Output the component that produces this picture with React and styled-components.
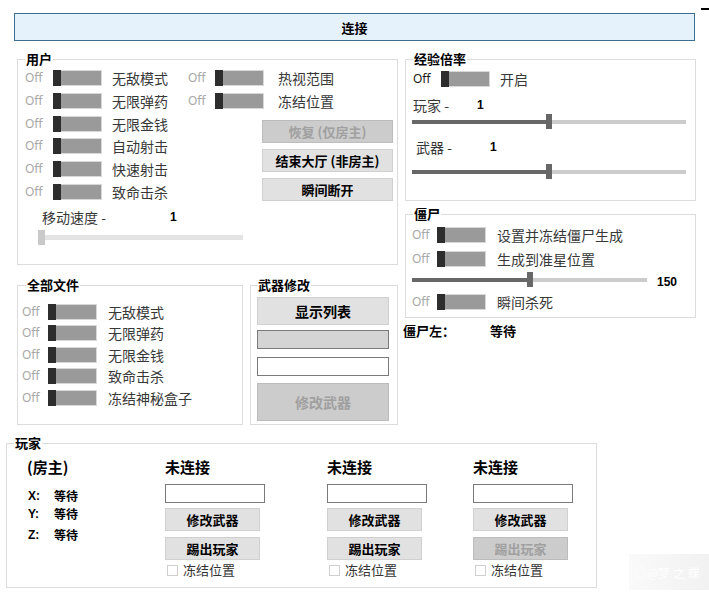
import React from 'react';
import styled, { createGlobalStyle } from 'styled-components';

const GlobalStyle = createGlobalStyle`
    body {
        margin: 0;
        background: #fff;
    }
    * {
        box-sizing: border-box;
    }
`;

const CJK = `"Noto Sans CJK SC", "Noto Sans", sans-serif`;

const Page = styled.div`
    width: 709px;
    height: 592px;
    position: relative;
    overflow: hidden;
    background: #fff;
    font-family: ${CJK};
    color: #000;
`;

const TopBar = styled.div`
    display: flex;
    align-items: flex-start;
    height: 41px;
    padding: 8px 0 0 14px;
`;

const ConnectButton = styled.div`
    margin-top: 5px;
    width: 681px;
    height: 28px;
    display: flex;
    align-items: center;
    justify-content: center;
    border: 1px solid #3e6f8e;
    background: #e5f1fb;
    font-size: 13px;
    font-weight: 700;
`;

const Dash = styled.span`
    margin-left: 6px;
    width: 8px;
    height: 2px;
    background: #000;
`;

const Main = styled.div`
    display: grid;
    grid-template-columns: 381px 291px;
    column-gap: 7px;
    padding-left: 17px;
    margin-top: 11px;
    align-items: start;
`;

const Column = styled.div`
    display: flex;
    flex-direction: column;
    gap: ${({ gap }) => gap}px;
`;

const Group = styled.fieldset`
    margin: ${({ $m }) => $m || 0};
    padding: 0;
    min-width: 0;
    width: ${({ $w }) => $w}px;
    height: ${({ $h }) => $h}px;
    border: 1px solid #dcdcdc;
`;

const Legend = styled.legend`
    margin-left: ${({ $ml }) => ($ml === undefined ? 7 : $ml)}px;
    padding: 0 1px;
    height: 14px;
    font-size: 13px;
    font-weight: 700;
    line-height: 14px;
`;

const Body = styled.div`
    padding: ${({ pad }) => pad};
    display: flex;
    flex-direction: column;
`;

/* toggle */
const Row = styled.div`
    display: flex;
    align-items: center;
    height: ${({ h }) => h}px;
    margin-top: ${({ mt }) => mt || 0}px;
`;

const Off = styled.span`
    width: ${({ w }) => w}px;
    font-family: "Noto Sans", sans-serif;
    font-size: 12px;
    line-height: 1;
    color: ${({ dark }) => (dark ? '#1a1a1a' : '#a8a8a8')};
`;

const Switch = styled.span`
    display: flex;
    width: 49px;
    height: 16px;
`;

const Knob = styled.span`
    width: 8px;
    background: #2d2d2d;
`;

const Track = styled.span`
    flex: 1;
    background: #9a9a9a;
    border: 1px solid #d8d8d8;
    border-left: none;
`;

const Label = styled.span`
    margin-left: ${({ gap }) => gap}px;
    font-size: 14px;
    line-height: 1;
    color: #383838;
    white-space: nowrap;
`;

const Toggle = ({ label, offW, gap, h, dark, mt }) => (
    <Row h={h} mt={mt}>
        <Off w={offW} dark={dark}>
            Off
        </Off>
        <Switch>
            <Knob />
            <Track />
        </Switch>
        <Label gap={gap}>{label}</Label>
    </Row>
);

/* slider */
const SliderBox = styled.div`
    position: relative;
    display: flex;
    align-items: center;
    width: ${({ w }) => (w ? `${w}px` : '100%')};
    height: 15px;
    margin: ${({ m }) => m || 0};
    flex-shrink: 0;
`;

const Rail = styled.div`
    width: 100%;
    height: ${({ light }) => (light ? 5 : 4)}px;
    background: ${({ light }) => (light ? '#e3e3e3' : '#cccccc')};
`;

const Thumb = styled.div`
    position: absolute;
    top: 0;
    width: ${({ light }) => (light ? 7 : 6)}px;
    height: 15px;
    background: ${({ light }) => (light ? '#c9c9c9' : '#676767')};
`;

const Slider = ({ value, light, w, m }) => {
    const pct = value * 100;
    return (
        <SliderBox w={w} m={m}>
            <Rail
                light={light}
                style={
                    light
                        ? undefined
                        : { background: `linear-gradient(to right, #676767 ${pct}%, #cccccc ${pct}%)` }
                }
            />
            <Thumb light={light} style={{ left: `calc(${pct}% - ${light ? 0 : 3}px)` }} />
        </SliderBox>
    );
};

const ValueRow = styled.div`
    display: flex;
    align-items: center;
    height: 18px;
    margin-top: ${({ mt }) => mt || 0}px;
    padding-left: ${({ indent }) => indent || 0}px;
`;

const ValueName = styled.span`
    width: ${({ w }) => w}px;
    font-size: 14px;
    line-height: 1;
    color: #383838;
    white-space: nowrap;
`;

const Num = styled.span`
    font-family: "Liberation Sans", Arial, sans-serif;
    font-size: 12px;
    font-weight: 700;
    margin-top: ${({ mt }) => mt || 0}px;
    margin-left: ${({ ml }) => ml || 0}px;
`;

/* buttons */
const Button = styled.div`
    width: ${({ w }) => w}px;
    height: ${({ h }) => h}px;
    margin-top: ${({ mt }) => mt || 0}px;
    display: flex;
    align-items: center;
    justify-content: center;
    border: 1px solid ${({ $off }) => ($off ? '#bcbcbc' : '#d0d0d0')};
    background: ${({ $off }) => ($off ? '#cccccc' : '#e1e1e1')};
    color: ${({ $off }) => ($off ? '#a0a0a0' : '#000')};
    font-size: ${({ fs }) => fs || 13}px;
    font-weight: 700;
    white-space: nowrap;
`;

const Field = styled.div`
    width: ${({ w }) => (w ? `${w}px` : '100%')};
    height: 19px;
    margin-top: ${({ mt }) => mt || 0}px;
    border: 1px solid #7a7a7a;
    background: ${({ gray }) => (gray ? '#d4d4d4' : '#fff')};
`;

/* user group */
const UserCols = styled.div`
    display: flex;
`;

const ToggleList = styled.div`
    display: flex;
    flex-direction: column;
    width: ${({ w }) => (w ? `${w}px` : 'auto')};
`;

const UserRight = styled.div`
    flex: 1;
    display: flex;
    flex-direction: column;
`;

const ButtonStack = styled.div`
    display: flex;
    flex-direction: column;
    align-items: flex-end;
    gap: 6px;
    margin-top: 8px;
`;

const BottomRow = styled.div`
    display: flex;
    gap: 7px;
`;

const SliderRow = styled.div`
    display: flex;
    align-items: flex-start;
    margin-top: 1px;
`;

const StatusLine = styled.div`
    display: flex;
    margin: -3px 0 0 -2px;
    height: 18px;
    align-items: center;
    font-size: 13px;
    font-weight: 700;
`;

const StatusName = styled.span`
    width: 87px;
`;

/* players */
const PlayerGrid = styled.div`
    display: grid;
    grid-template-columns: 138px 162px 146px 120px;
    padding: 7px 0 0 20px;
`;

const PlayerCol = styled.div`
    display: flex;
    flex-direction: column;
`;

const Heading = styled.div`
    height: 20px;
    line-height: 20px;
    font-size: 15px;
    font-weight: 700;
`;

const CoordRow = styled.div`
    display: flex;
    align-items: center;
    height: 18px;
    line-height: 18px;
    margin-top: ${({ mt }) => mt}px;
    font-size: 12px;
    font-weight: 700;
`;

const Axis = styled.span`
    width: 27px;
    padding-left: 1px;
    font-family: "Liberation Sans", Arial, sans-serif;
    font-size: 12px;
`;

const CheckRow = styled.div`
    display: flex;
    align-items: center;
    height: 16px;
    margin-top: 2px;
`;

const CheckBox = styled.span`
    width: 11px;
    height: 11px;
    margin-left: 2px;
    border: 1px solid #cfcfcf;
    background: #fff;
`;

const CheckLabel = styled.span`
    margin-left: 5px;
    font-size: 13px;
    line-height: 16px;
    color: #333;
`;

const Watermark = styled.div`
    position: absolute;
    right: 0;
    bottom: 2px;
    width: 80px;
    height: 36px;
    display: flex;
    align-items: center;
    padding-left: 6px;
    background: linear-gradient(to right, rgba(244, 244, 244, 0.5), rgba(238, 238, 238, 0.8));
    color: rgba(255, 255, 255, 0.95);
    font-size: 12px;
    white-space: nowrap;
`;

const userLeft = ['无敌模式', '无限弹药', '无限金钱', '自动射击', '快速射击', '致命击杀'];
const userRight = ['热视范围', '冻结位置'];
const allFiles = ['无敌模式', '无限弹药', '无限金钱', '致命击杀', '冻结神秘盒子'];
const players = [{ kickDisabled: false }, { kickDisabled: false }, { kickDisabled: true }];

const App = () => (
    <Page>
        <GlobalStyle />
        <TopBar>
            <ConnectButton>连接</ConnectButton>
            <Dash />
        </TopBar>

        <Main>
            <Column gap={13}>
                <Group $w={381} $h={213}>
                    <Legend>用户</Legend>
                    <Body pad="1px 4px 0 7px">
                        <UserCols>
                            <ToggleList w={163}>
                                {userLeft.map(l => (
                                    <Toggle key={l} label={l} offW={28} gap={10} h={22.7} />
                                ))}
                            </ToggleList>
                            <UserRight>
                                {userRight.map(l => (
                                    <Toggle key={l} label={l} offW={27} gap={14} h={22.7} />
                                ))}
                                <ButtonStack>
                                    <Button w={131} h={23} $off>
                                        恢复 (仅房主)
                                    </Button>
                                    <Button w={131} h={23}>
                                        结束大厅 (非房主)
                                    </Button>
                                    <Button w={131} h={23}>
                                        瞬间断开
                                    </Button>
                                </ButtonStack>
                            </UserRight>
                        </UserCols>
                        <ValueRow mt={5} indent={17}>
                            <ValueName w={128}>移动速度 -</ValueName>
                            <Num>1</Num>
                        </ValueRow>
                        <Slider value={0} light w={205} m="4px 0 0 13px" />
                    </Body>
                </Group>

                <BottomRow>
                    <Group $w={226} $h={147}>
                        <Legend $ml={8}>全部文件</Legend>
                        <Body pad="9px 0 0 4px">
                            {allFiles.map(l => (
                                <Toggle key={l} label={l} offW={26} gap={11} h={21.5} />
                            ))}
                        </Body>
                    </Group>
                    <Group $w={148} $h={147}>
                        <Legend $ml={6}>武器修改</Legend>
                        <Body pad="5px 0 0 6px">
                            <Button w={132} h={28} fs={14}>
                                显示列表
                            </Button>
                            <Field w={132} mt={5} gray />
                            <Field w={132} mt={8} />
                            <Button w={132} h={38} mt={7} fs={14} $off>
                                修改武器
                            </Button>
                        </Body>
                    </Group>
                </BottomRow>
            </Column>

            <Column gap={6}>
                <Group $w={291} $h={149}>
                    <Legend>经验倍率</Legend>
                    <Body pad="2px 8px 0 7px">
                        <Toggle label="开启" offW={28} gap={10} h={22} dark />
                        <ValueRow mt={6}>
                            <ValueName w={64}>玩家 -</ValueName>
                            <Num>1</Num>
                        </ValueRow>
                        <Slider value={0.5} m="0 0 0 -1px" />
                        <ValueRow mt={9} indent={3}>
                            <ValueName w={74}>武器 -</ValueName>
                            <Num>1</Num>
                        </ValueRow>
                        <Slider value={0.5} m="8px 0 0 -1px" />
                    </Body>
                </Group>

                <Group $w={291} $h={111}>
                    <Legend>僵尸</Legend>
                    <Body pad="2px 8px 0 6px">
                        <Toggle label="设置并冻结僵尸生成" offW={25} gap={11} h={24} />
                        <Toggle label="生成到准星位置" offW={25} gap={11} h={24} />
                        <SliderRow>
                            <Slider value={0.5} w={235} />
                            <Num ml={10} mt={3}>
                                150
                            </Num>
                        </SliderRow>
                        <Toggle label="瞬间杀死" offW={25} gap={11} h={22} mt={2} />
                    </Body>
                </Group>

                <StatusLine>
                    <StatusName>僵尸左：</StatusName>
                    <span>等待</span>
                </StatusLine>
            </Column>
        </Main>

        <Group $w={591} $h={152} $m="11px 0 0 6px">
            <Legend $ml={7}>玩家</Legend>
            <PlayerGrid>
                <PlayerCol>
                    <Heading>(房主)</Heading>
                    <CoordRow mt={10}>
                        <Axis>X:</Axis>等待
                    </CoordRow>
                    <CoordRow mt={0}>
                        <Axis>Y:</Axis>等待
                    </CoordRow>
                    <CoordRow mt={3}>
                        <Axis>Z:</Axis>等待
                    </CoordRow>
                </PlayerCol>
                {players.map((p, i) => (
                    <PlayerCol key={i}>
                        <Heading>未连接</Heading>
                        <Field w={100} mt={7} />
                        <Button w={95} h={23} mt={5}>
                            修改武器
                        </Button>
                        <Button w={95} h={23} mt={6} $off={p.kickDisabled}>
                            踢出玩家
                        </Button>
                        <CheckRow>
                            <CheckBox />
                            <CheckLabel>冻结位置</CheckLabel>
                        </CheckRow>
                    </PlayerCol>
                ))}
            </PlayerGrid>
        </Group>

        <Watermark>◎@梦 之 蝶</Watermark>
    </Page>
);

export default App;
